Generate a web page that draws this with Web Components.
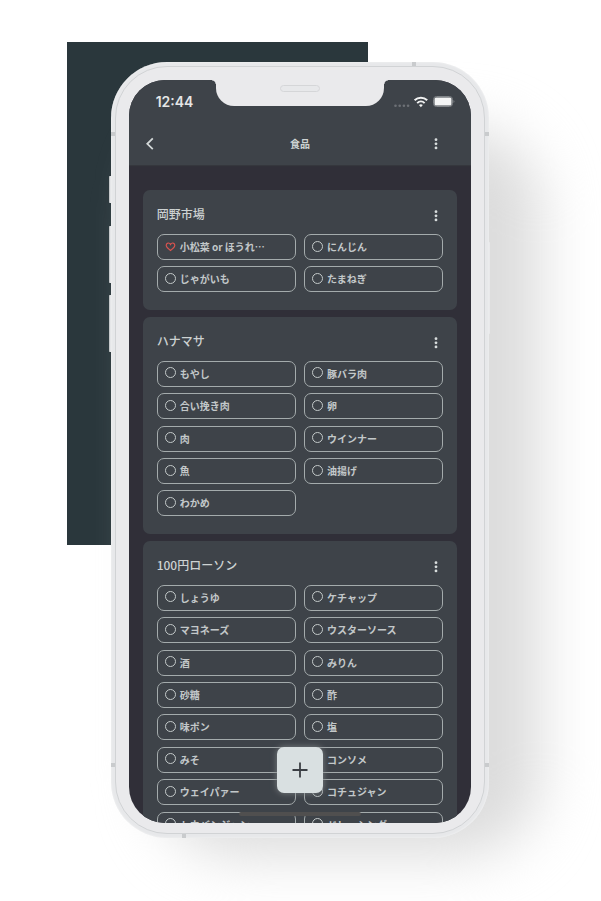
<!DOCTYPE html>
<html lang="ja">
<head>
<meta charset="utf-8">
<meta name="viewport" content="width=device-width, initial-scale=1">
<title>食品</title>
<style>
html,body{margin:0;min-height:100%;background:#fff}
body{font-family:"Noto Sans CJK JP",sans-serif;color:#cdd2d2;overflow-x:hidden}
</style>
</head>
<body>
<product-stage>
  <phone-frame>
    <status-bar slot="status" time="12:44"></status-bar>
    <app-header slot="header" heading="食品"></app-header>
    <shop-card heading="岡野市場">
      <shop-item icon="heart">小松菜 or ほうれ…</shop-item><shop-item>にんじん</shop-item>
      <shop-item>じゃがいも</shop-item><shop-item>たまねぎ</shop-item>
    </shop-card>
    <shop-card heading="ハナマサ">
      <shop-item>もやし</shop-item><shop-item>豚バラ肉</shop-item>
      <shop-item>合い挽き肉</shop-item><shop-item>卵</shop-item>
      <shop-item>肉</shop-item><shop-item>ウインナー</shop-item>
      <shop-item>魚</shop-item><shop-item>油揚げ</shop-item>
      <shop-item>わかめ</shop-item>
    </shop-card>
    <shop-card heading="100円ローソン">
      <shop-item>しょうゆ</shop-item><shop-item>ケチャップ</shop-item>
      <shop-item>マヨネーズ</shop-item><shop-item>ウスターソース</shop-item>
      <shop-item>酒</shop-item><shop-item>みりん</shop-item>
      <shop-item>砂糖</shop-item><shop-item>酢</shop-item>
      <shop-item>味ポン</shop-item><shop-item>塩</shop-item>
      <shop-item>みそ</shop-item><shop-item>コンソメ</shop-item>
      <shop-item>ウェイパァー</shop-item><shop-item>コチュジャン</shop-item>
      <shop-item>トウバンジャン</shop-item><shop-item>ドレッシング</shop-item>
    </shop-card>
    <add-button slot="action"></add-button>
  </phone-frame>
</product-stage>
<script>
const define = (name, html, setup) => customElements.define(name, class extends HTMLElement {
  connectedCallback() {
    if (this.shadowRoot) return;
    const t = document.createElement('template');
    t.innerHTML = html;
    this.attachShadow({ mode: 'open' }).append(t.content.cloneNode(true));
    if (setup) setup(this, this.shadowRoot);
  }
});

define('product-stage', `
<style>
:host{display:grid;grid-template-columns:11% 50% 1fr;grid-template-rows:42px 503px 1fr;min-height:100vh;box-sizing:border-box;overflow:hidden}
.panel{grid-area:2/2;background:#2a373c;margin:0 -1px 0 1px}
.content{grid-area:1/1/4/4;display:flex;justify-content:center;padding:62px 0;isolation:isolate}
</style>
<div class="panel"></div><div class="content"><slot></slot></div>`);

define('phone-frame', `
<style>
:host{display:block;position:relative;align-self:flex-start;width:63%;box-sizing:border-box;margin-right:1px}
.shadow{position:absolute;inset:66px -52px -18px 46px;border-radius:80px;background:#dcdcdc;filter:blur(28px);z-index:-1}
.key{position:absolute;left:-2px;width:4px;background:#e5e6e8;border-left:1px solid #c5c8ca;box-sizing:border-box;border-radius:1px}
.k1{top:114px;height:27px}.k2{top:164px;height:57px}.k3{top:233px;height:57px}
.k4{left:auto;right:-1px;top:180px;height:92px;width:3px;border:0;background:#e9e9eb}
.body{position:relative;background:#e7e8ea;border-radius:56px;padding:4px;box-shadow:inset 0 0 2px #f8f8f8}
.rim{background:#eaeaec;border:1px solid #d1d3d5;border-radius:52px;padding:13px 13px 10px;box-sizing:border-box}
.band{position:absolute;width:4px;height:4px;background:#c9cbcd}
.b1{left:0;top:70px}.b2{right:0;top:70px}.b3{left:0;bottom:71px}.b4{right:0;bottom:71px}
.b5{right:73px;top:0}.b6{left:71px;bottom:0}
.screen{position:relative;display:flex;flex-direction:column;height:743px;overflow:hidden;background:#302f38;border-radius:36px}
.notch{position:absolute;z-index:2;top:0;left:25%;right:25%;height:26px;background:#eaeaec;border-radius:0 0 18px 18px;margin:0 2px}
.notch::before,.notch::after{content:"";position:absolute;top:0;width:4px;height:4px}
.notch::before{right:100%;background:radial-gradient(circle at 0 100%,transparent 3px,#eaeaec 4px)}
.notch::after{left:100%;background:radial-gradient(circle at 100% 100%,transparent 3px,#eaeaec 4px)}
.speaker{position:absolute;left:50%;top:5px;width:40px;height:7px;box-sizing:border-box;margin-left:-20px;border:1px solid #d5d6d8;border-radius:4px;background:#e7e8ea}
.list{flex:1;min-height:0;display:flex;flex-direction:column;gap:7px;padding:25px 14px 0;overflow:hidden}
.home{position:absolute;z-index:2;left:50%;bottom:7px;width:122px;height:4px;margin-left:-61px;border-radius:2px;background:#504f4f}
.action{position:absolute;z-index:3;left:50%;bottom:30px;width:46px;margin-left:-23px}
</style>
<div class="shadow"></div>
<i class="key k1"></i><i class="key k2"></i><i class="key k3"></i><i class="key k4"></i>
<div class="body"><div class="rim"><div class="screen">
<div class="notch"><div class="speaker"></div></div>
<slot name="status"></slot><slot name="header"></slot>
<div class="list"><slot></slot></div>
<div class="home"></div><div class="action"><slot name="action"></slot></div>
</div></div>
<i class="band b1"></i><i class="band b2"></i><i class="band b3"></i><i class="band b4"></i><i class="band b5"></i><i class="band b6"></i></div>`);

define('status-bar', `
<style>
:host{display:flex;flex:none;justify-content:space-between;align-items:center;height:43px;padding:0 16px 0 27px;background:#3e4349;font:600 14px/20px Inter,sans-serif;color:#e4e6e6}
svg{display:block}
</style>
<time></time>
<svg width="61" height="16" viewBox="0 0 61 16" aria-hidden="true">
<g fill="#6d7176"><circle cx="1.5" cy="11.8" r="1.3"/><circle cx="5.7" cy="11.8" r="1.3"/><circle cx="9.9" cy="11.8" r="1.3"/><circle cx="14.1" cy="11.8" r="1.3"/></g>
<g fill="none" stroke="#f0f1f1" stroke-width="2"><path d="M20.6 6.3a9 9 0 0 1 12.6 0"/><path d="M23.2 9.1a5.3 5.3 0 0 1 7.4 0"/></g><path d="M25 11.1a2.8 2.8 0 0 1 3.8 0L26.9 13.3z" fill="#f0f1f1"/>
<rect x="39.5" y="2.5" width="19" height="10" rx="3" fill="none" stroke="#808488"/><rect x="40.5" y="3.5" width="17" height="8" rx="1.5" fill="#f4f5f5"/><path d="M59.5 6q2 1.5 0 3z" fill="#808488"/></svg>`,
(h, r) => r.querySelector('time').textContent = h.getAttribute('time'));

define('more-button', `
<style>
:host{display:block}
button{display:block;width:14px;height:16px;padding:0;border:0;background:none;color:#d8dddd}
svg{display:block}
</style>
<button aria-label="メニュー"><svg width="14" height="16" viewBox="0 0 14 16" fill="currentColor"><circle cx="7" cy="3.7" r="1.4"/><circle cx="7" cy="7.8" r="1.4"/><circle cx="7" cy="11.9" r="1.4"/></svg></button>`);

define('app-header', `
<style>
:host{display:grid;flex:none;grid-template-columns:14px 1fr 14px;align-items:center;height:42px;padding:0 28px 0 14px;background:#3e4349;box-shadow:0 1px 1px #35373d}
button{padding:0;border:0;background:none;color:#d3d8d8}
svg{display:block}
h1{margin:0 0 0 14px;text-align:center;font-size:10px;line-height:16px;font-weight:700}
</style>
<button aria-label="戻る"><svg width="14" height="16" viewBox="0 0 14 16" fill="none" stroke="currentColor" stroke-width="1.8"><path d="M9.8 2.4 4.3 7.8l5.5 5.4"/></svg></button>
<h1></h1><more-button></more-button>`,
(h, r) => r.querySelector('h1').textContent = h.getAttribute('heading'));

define('shop-card', `
<style>
:host{display:block;flex:none;background:#3e4349;border-radius:7px;padding:14px 14px 11px}
header{display:flex;justify-content:space-between;align-items:center;height:20px;margin-bottom:10px}
h2{margin:0;font-size:12px;line-height:20px;font-weight:500}
more-button{padding-top:4px}
.items{display:grid;grid-template-columns:1fr 1fr;column-gap:8px}
</style>
<header><h2></h2><more-button></more-button></header><div class="items"><slot></slot></div>`,
(h, r) => r.querySelector('h2').textContent = h.getAttribute('heading'));

define('shop-item', `
<style>
:host{display:block;min-width:0;margin-bottom:4.6%}
label{display:flex;align-items:center;gap:4px;height:26px;box-sizing:border-box;padding:0 7px;border:1px solid #a4abac;border-radius:7px;font-size:10px;line-height:16px;font-weight:700;color:#c3c8c9;white-space:nowrap}
.mark{display:grid;flex:none;width:11px;height:11px;margin-bottom:2px}
input{grid-area:1/1;appearance:none;box-sizing:border-box;width:11px;height:11px;margin:0;border:1px solid #c4caca;border-radius:50%}
svg{display:none;grid-area:1/1}
:host([icon=heart]) input{border-color:transparent}
:host([icon=heart]) svg{display:block}
</style>
<label><span class="mark"><input type="checkbox"><svg width="11" height="11" viewBox="0 0 11 11" fill="none" stroke="#d9534f" stroke-width="1.2" aria-hidden="true"><path d="M5.5 9.4C3 7.7 1.2 6.1 1.2 4.3c0-2.6 3.1-3.1 4.3-.9 1.2-2.2 4.3-1.7 4.3.9 0 1.8-1.8 3.4-4.3 5.1z"/></svg></span><span><slot></slot></span></label>`);

define('add-button', `
<style>
:host{display:block}
button{display:grid;place-items:center;width:46px;height:46px;padding:0;border:0;border-radius:7px;background:#d9e0e1;color:#3b3f44;box-shadow:0 0 6px #7d8284}
svg{display:block}
</style>
<button aria-label="追加"><svg width="18" height="18" viewBox="0 0 18 18" stroke="currentColor" stroke-width="1.8"><path d="M9 1.5v15M1.5 9h15"/></svg></button>`);
</script>
</body>
</html>
